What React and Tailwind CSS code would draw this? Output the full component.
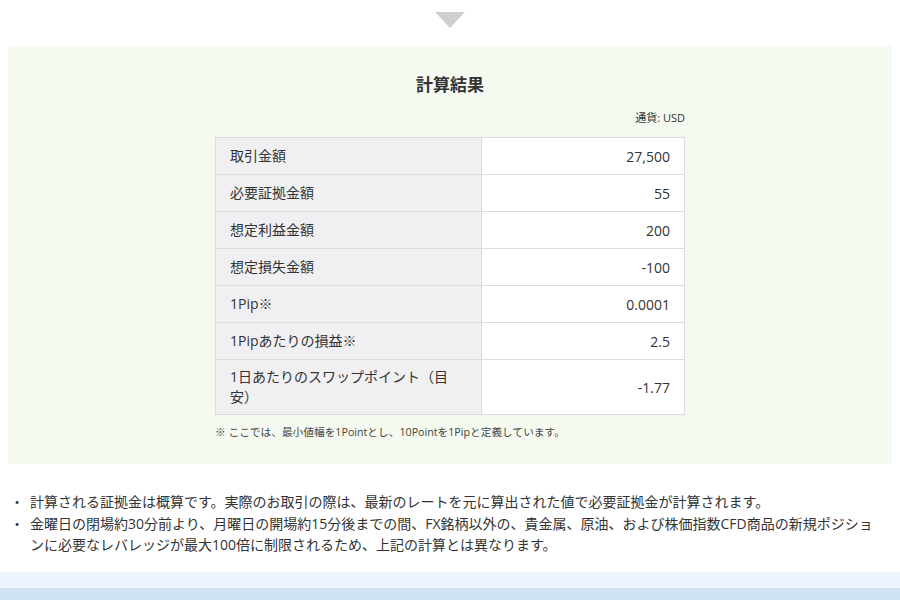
const rows = [
  { label: '取引金額', value: '27,500' },
  { label: '必要証拠金額', value: '55' },
  { label: '想定利益金額', value: '200' },
  { label: '想定損失金額', value: '-100' },
  { label: '1Pip※', value: '0.0001' },
  { label: '1Pipあたりの損益※', value: '2.5' },
  { label: '1日あたりのスワップポイント（目安）', value: '-1.77', tall: true },
];

export default function App() {
  return (
    <div className="w-[900px] h-[600px] overflow-hidden bg-white text-[#333] font-['Open_Sans','Noto_Sans_CJK_JP',sans-serif]">
      {/* ---- Arrow ---- */}
      <div className="flex justify-center pt-[12px] h-[46px]">
        <svg width="30" height="16" viewBox="0 0 30 16">
          <polygon points="0,0 30,0 15,16" fill="#cfcfcf" />
        </svg>
      </div>

      {/* ---- Result panel ---- */}
      <div className="mx-[8px] h-[418px] bg-[#f4faf0] pt-[26px]">
        <h2 className="text-center text-[17px] font-bold leading-[26px] text-[#333]">計算結果</h2>
        <div className="w-[470px] mx-auto mt-[4px]">
          <p className="text-right text-[11px] leading-[16px] mt-[12px] mb-[11px]">通貨: USD</p>
          <table className="w-full border-collapse text-[14px]">
            <tbody>
              {rows.map((r) => (
                <tr key={r.label} className={r.tall ? 'h-[55px]' : 'h-[37px]'}>
                  <td className="w-[266px] border border-[#dcdcdc] bg-[#f0f0f2] pl-[14px] pr-[24px] leading-[20px]">
                    {r.label}
                  </td>
                  <td className="border border-[#dcdcdc] bg-white pr-[14px] text-right">{r.value}</td>
                </tr>
              ))}
            </tbody>
          </table>
          <p className="text-[10.7px] leading-[14px] mt-[10px] text-[#444]">
            ※ ここでは、最小値幅を1Pointとし、10Pointを1Pipと定義しています。
          </p>
        </div>
      </div>

      {/* ---- Notes ---- */}
      <ul className="mt-[27px] pl-[10px] pr-[26px] text-[14px] leading-[21.5px] text-[#333]">
        <li className="flex">
          <span className="w-[20px] shrink-0">・</span>
          <span>計算される証拠金は概算です。実際のお取引の際は、最新のレートを元に算出された値で必要証拠金が計算されます。</span>
        </li>
        <li className="flex">
          <span className="w-[20px] shrink-0">・</span>
          <span className="[line-break:anywhere]">金曜日の閉場約30分前より、月曜日の開場約15分後までの間、FX銘柄以外の、貴金属、原油、および株価指数CFD商品の新規ポジションに必要なレバレッジが最大100倍に制限されるため、上記の計算とは異なります。</span>
        </li>
      </ul>

      {/* ---- Bottom bars ---- */}
      <div className="mt-[16px] h-[16px] bg-[#ebf3fc]" />
      <div className="h-[20px] bg-[#d0e2f6]" />
    </div>
  );
}
